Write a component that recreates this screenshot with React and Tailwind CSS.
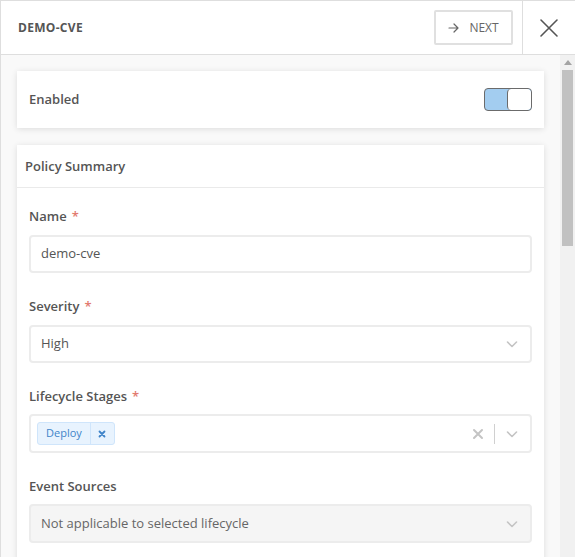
import React from "react";

function Chevron() {
  return (
    <svg width="14" height="14" viewBox="0 0 14 14" fill="none" stroke="#c4c4c4" strokeWidth="1.6" strokeLinecap="round" strokeLinejoin="round">
      <path d="M2.5 5 L7 9.5 L11.5 5" />
    </svg>
  );
}

function Label({ text, required, mb = "mb-[9px]" }) {
  return (
    <div className={`h-5 ${mb} text-[13px] font-semibold text-[#555] leading-5`}>
      {text}
      {required && <span className="text-[#e27a6f] ml-[5px]">*</span>}
    </div>
  );
}

export default function App() {
  return (
    <div
      className="w-[575px] h-[557px] flex flex-col bg-white overflow-hidden border-l border-t border-[#dedede]"
      style={{ fontFamily: '"Open Sans", "Noto Sans", sans-serif' }}
    >
      {/* Header */}
      <div className="h-[54px] shrink-0 flex items-center border-b border-[#dedede] bg-white">
        <div className="flex-1 pl-[17px] text-[12px] font-bold tracking-[0.3px] text-[#555]">DEMO-CVE</div>
        <div className="w-[79px] h-[35px] mr-[9px] flex items-center justify-center gap-[10px] border-2 border-[#e0e0e0] rounded-[2px] text-[12px] text-[#666]">
          <svg width="11" height="10" viewBox="0 0 11 10" fill="none" stroke="#666" strokeWidth="1.2" strokeLinecap="round" strokeLinejoin="round">
            <path d="M1 5 H10 M6 1 L10 5 L6 9" />
          </svg>
          <span className="mt-[1px]">NEXT</span>
        </div>
        <div className="w-[53px] h-full border-l border-[#dedede] flex items-center justify-center">
          <svg width="20" height="20" viewBox="0 0 20 20" fill="none" stroke="#555" strokeWidth="1.6" strokeLinecap="round">
            <path d="M2 2 L18 18 M18 2 L2 18" />
          </svg>
        </div>
      </div>

      {/* Body */}
      <div className="flex-1 flex min-h-0 bg-[#f9f9f9]">
        <div className="flex-1 px-[16px] pt-[16px] flex flex-col gap-[17px] overflow-hidden">
          {/* Enabled card */}
          <div className="h-[57px] shrink-0 bg-white shadow-[0_1px_6px_rgba(0,0,0,0.12)] flex items-center justify-between pl-[12px] pr-[12px]">
            <span className="text-[13px] font-semibold text-[#555]">Enabled</span>
            <div className="w-[48px] h-[23px] rounded-[4px] border border-[#6b6b6b] bg-[#a3cdf0] flex justify-end overflow-hidden">
              <div className="w-[24px] h-full bg-white border-l border-[#6b6b6b] rounded-[4px]" />
            </div>
          </div>

          {/* Policy Summary card */}
          <div className="shrink-0 bg-white shadow-[0_1px_6px_rgba(0,0,0,0.12)]">
            <div className="h-[43px] flex items-center pl-[8px] pt-[1px] border-b border-[#eaeaea] text-[13px] font-semibold text-[#555]">
              Policy Summary
            </div>
            <div className="px-[12px] pt-[18px] pb-[20px]">
              <Label text="Name" required />
              <div className="h-[38px] border-2 border-[#ececec] rounded-[4px] flex items-center pl-[10px] text-[13px] text-[#555]">
                demo-cve
              </div>

              <div className="h-[23px]" />
              <Label text="Severity" required />
              <div className="h-[38px] border-2 border-[#ececec] rounded-[4px] flex items-center justify-between pl-[10px] pr-[11px] text-[13px] text-[#555]">
                <span>High</span>
                <Chevron />
              </div>

              <div className="h-[23px]" />
              <Label text="Lifecycle Stages" required mb="mb-[8px]" />
              <div className="h-[39px] border-2 border-[#ececec] rounded-[4px] flex items-center justify-between pl-[6px] pr-[11px]">
                <div className="flex h-[23px] rounded-[3px] border border-[#cfe5fb] bg-[#e8f3fe] text-[11px] text-[#3f84c9]">
                  <span className="px-[8px] flex items-center">Deploy</span>
                  <span className="w-[24px] border-l border-[#cfe5fb] flex items-center justify-center">
                    <svg width="8" height="8" viewBox="0 0 8 8" fill="none" stroke="#3f84c9" strokeWidth="1.8" strokeLinecap="round">
                      <path d="M1.5 1.5 L6.5 6.5 M6.5 1.5 L1.5 6.5" />
                    </svg>
                  </span>
                </div>
                <div className="flex items-center">
                  <svg width="12" height="12" viewBox="0 0 12 12" fill="none" stroke="#c4c4c4" strokeWidth="2" strokeLinecap="round">
                    <path d="M2 2 L10 10 M10 2 L2 10" />
                  </svg>
                  <div className="w-px h-[20px] bg-[#d0d0d0] mx-[10px]" />
                  <Chevron />
                </div>
              </div>

              <div className="h-[23px]" />
              <Label text="Event Sources" mb="mb-[8px]" />
              <div className="h-[39px] border-2 border-[#ececec] bg-[#f5f5f5] rounded-[4px] flex items-center justify-between pl-[10px] pr-[11px] text-[13px] text-[#666]">
                <span>Not applicable to selected lifecycle</span>
                <Chevron />
              </div>
            </div>
          </div>
        </div>

        {/* Scrollbar */}
        <div className="w-[15px] shrink-0 bg-[#f1f1f1] flex flex-col items-center">
          <div className="h-[15px] flex items-center justify-center">
            <svg width="8" height="5" viewBox="0 0 8 5">
              <path d="M0 5 L4 0 L8 5 Z" fill="#a3a3a3" />
            </svg>
          </div>
          <div className="w-[11px] h-[176px] bg-[#c1c1c1]" />
        </div>
      </div>
    </div>
  );
}
